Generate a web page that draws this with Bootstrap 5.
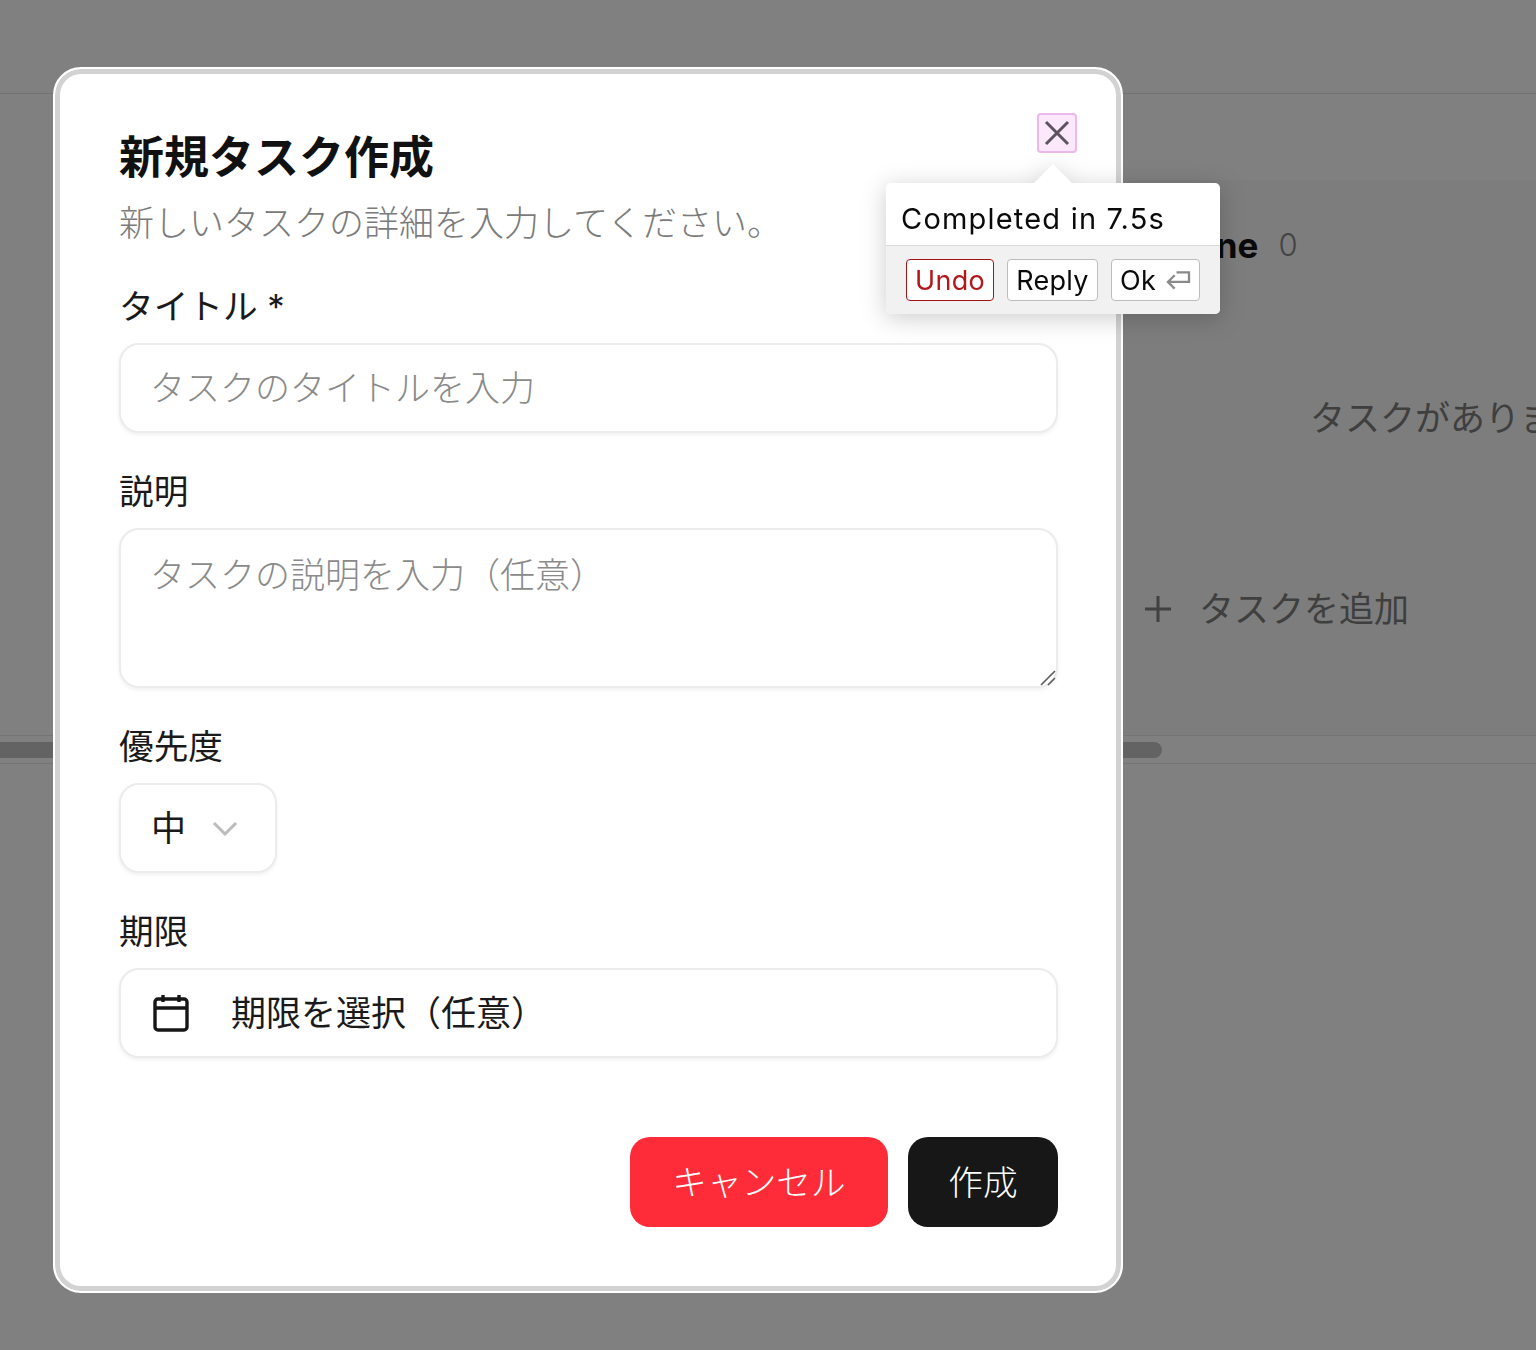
<!DOCTYPE html>
<html lang="ja">
<head>
  <meta charset="UTF-8">
  <title>新規タスク作成</title>
  <meta name="viewport" content="width=device-width, initial-scale=1">
  <link href="https://cdn.jsdelivr.net/npm/bootstrap@5.3.3/dist/css/bootstrap.min.css" rel="stylesheet">
  <style>
    body { background: #808080; font-family: Inter, "Noto Sans CJK JP", sans-serif; overflow: hidden; }
    .page-bg { height: 1350px; color: #3f3f3f; font-size: 35px; }
    .top-bar { height: 94px; border-bottom: 1px solid #727272; }
    .board { height: 641px; overflow: hidden; padding: 86px 0 0 1120px; }
    .board-col { width: 520px; height: 555px; background: #7d7d7d; border-radius: 16px 0 0 0; padding: 0 0 0 23px; }
    .col-head { height: 130px; padding-left: 26px; line-height: 46px; }
    .col-name { color: #0a0a0a; font-weight: 700; }
    .col-count { margin-left: 20px; font-size: 31px; color: #444; font-weight: 300; }
    .col-empty { height: 273px; padding: 82px 0 0 167px; white-space: nowrap; }
    .col-add { gap: 26px; white-space: nowrap; }
    .scroll-track { height: 29px; padding-top: 6px; border-top: 1px solid #747474; border-bottom: 1px solid #747474; }
    .scroll-thumb { width: 1162px; height: 16px; background: #636363; border-radius: 0 8px 8px 0; }

    .task-modal { position: absolute; left: 53px; top: 67px; width: 1070px; height: 1226px; background: #fff; border: 2px solid #fff; border-radius: 28px; box-shadow: inset 0 0 0 5px #d2d2d2; padding: 60px 63px 0 64px; color: #171717; }
    .modal-head { font-size: 45px; font-weight: 700; line-height: 58px; color: #111; }
    .modal-sub { font-size: 35px; line-height: 50px; margin-top: 11px; color: #7b7b7b; font-weight: 300; white-space: nowrap; }
    .field-label { display: block; font-size: 34.67px; line-height: 50px; margin: 33px 0 12px; font-weight: 400; color: #1a1a1a; }
    .field-box.form-control, .date-box.btn, .prio-box.btn { height: 90px; border: 2px solid #ececec; border-radius: 20px; box-shadow: 0 2px 4px rgba(0,0,0,.06); font-size: 35px; padding: 0 29px; background: #fff; color: #1a1a1a; }
    .field-box.form-control::placeholder { color: #8a8a8a; font-weight: 300; opacity: 1; }
    textarea.field-box.form-control { height: 160px; padding-top: 20px; line-height: 50px; resize: none; }
    .grip-mark { position: absolute; right: 1px; bottom: 1px; }
    .prio-box.btn { width: 158px; padding: 0 37px 0 30px; }
    .date-box.btn { width: 100%; gap: 42px; padding: 0 32px; }
    .modal-actions { margin-top: 79px; gap: 20px; }
    .act-btn.btn { height: 90px; border: 0; border-radius: 20px; font-size: 34.67px; color: #fff; font-weight: 300; }
    .act-cancel.btn { width: 258px; background: #fe2c38; }
    .act-create.btn { width: 150px; background: #171717; }

    .close-x { position: absolute; left: 982px; top: 44px; width: 40px; height: 40px; padding: 0; background: #fbe8fb; border: 2px solid #ecb9ec; border-radius: 4px; }
    .done-pop { position: absolute; left: 886px; top: 183px; width: 334px; height: 131px; background: #fff; border-radius: 5px; filter: drop-shadow(0 4px 12px rgba(0,0,0,.2)); color: #0a0a0a; }
    .done-pop::before { content: ""; position: absolute; left: 148px; top: -19px; width: 38px; height: 38px; background: #fff; clip-path: polygon(50% 0, 100% 50%, 0 50%); }
    .pop-msg { height: 63px; padding: 17px 0 0 15px; font-size: 29px; line-height: 38px; letter-spacing: 1.2px; white-space: nowrap; border-bottom: 1px solid #d9d9d9; }
    .pop-foot { height: 68px; background: #f1f1f1; border-radius: 0 0 5px 5px; padding: 13px 20px 0; gap: 13px; }
    .pop-btn.btn { height: 42px; padding: 2px 8px 0; font-size: 27px; line-height: 38px; letter-spacing: .3px; background: #fff; border: 1px solid #bdbdbd; border-radius: 4px; color: #0a0a0a; white-space: nowrap; }
    .pop-undo.btn { color: #b3161b; border-color: #a31318; width: 88px; }
    .pop-reply.btn { width: 91px; }
    .pop-ok.btn { width: 89px; gap: 10px; }
  </style>
</head>
<body>

  <div class="page-bg d-flex flex-column">
    <div class="top-bar"></div>
    <div class="board">
      <div class="board-col">
        <div class="col-head d-flex align-items-center">
          <span class="col-name">Done</span><span class="col-count">0</span>
        </div>
        <div class="col-empty">タスクがありません</div>
        <div class="col-add d-flex align-items-center">
          <svg width="30" height="30" viewBox="0 0 30 30" fill="none" stroke="#414141" stroke-width="3"><path d="M15 2v26M2 15h26"/></svg>
          <span>タスクを追加</span>
        </div>
      </div>
    </div>
    <div class="scroll-track"><div class="scroll-thumb"></div></div>
  </div>

  <div class="task-modal">
    <div class="modal-head">新規タスク作成</div>
    <div class="modal-sub">新しいタスクの詳細を入力してください。</div>

    <label class="field-label">タイトル *</label>
    <input class="form-control field-box" placeholder="タスクのタイトルを入力">

    <label class="field-label">説明</label>
    <div class="position-relative">
      <textarea class="form-control field-box" placeholder="タスクの説明を入力（任意）"></textarea>
      <svg class="grip-mark" width="18" height="18" viewBox="0 0 18 18" fill="none" stroke="#5c5c5c" stroke-width="1.6"><path d="M2 16L16 2M9 16l7-7"/></svg>
    </div>

    <label class="field-label">優先度</label>
    <button class="btn prio-box d-flex align-items-center justify-content-between" type="button">
      <span>中</span>
      <svg width="26" height="16" viewBox="0 0 26 16" fill="none" stroke="#bcbcbc" stroke-width="3"><path d="M2 3l11 11L24 3"/></svg>
    </button>

    <label class="field-label">期限</label>
    <button class="btn date-box d-flex align-items-center" type="button">
      <svg width="36" height="38" viewBox="0 0 36 38" fill="none" stroke="#161616" stroke-width="3.4"><rect x="2" y="5" width="32" height="31" rx="3"/><path d="M2 14h32M10 1v7M26 1v7"/></svg>
      <span>期限を選択（任意）</span>
    </button>

    <div class="modal-actions d-flex justify-content-end">
      <button class="btn act-btn act-cancel" type="button">キャンセル</button>
      <button class="btn act-btn act-create" type="button">作成</button>
    </div>

    <button class="close-x d-flex align-items-center justify-content-center" type="button" aria-label="Close">
      <svg width="26" height="26" viewBox="0 0 26 26" fill="none" stroke="#5d535e" stroke-width="3"><path d="M2 2l22 22M24 2L2 24"/></svg>
    </button>
  </div>

  <div class="done-pop">
    <div class="pop-msg">Completed in 7.5s</div>
    <div class="pop-foot d-flex">
      <button class="btn pop-btn pop-undo" type="button">Undo</button>
      <button class="btn pop-btn pop-reply" type="button">Reply</button>
      <button class="btn pop-btn pop-ok d-flex align-items-center" type="button">
        <span>Ok</span>
        <svg width="26" height="22" viewBox="0 0 26 22" fill="none" stroke="#8a8a8a" stroke-width="2.4"><path d="M11 2H24V12H2M9 5l-7 7 7 7"/></svg>
      </button>
    </div>
  </div>

  <script src="https://cdn.jsdelivr.net/npm/bootstrap@5.3.3/dist/js/bootstrap.bundle.min.js"></script>
</body>
</html>
